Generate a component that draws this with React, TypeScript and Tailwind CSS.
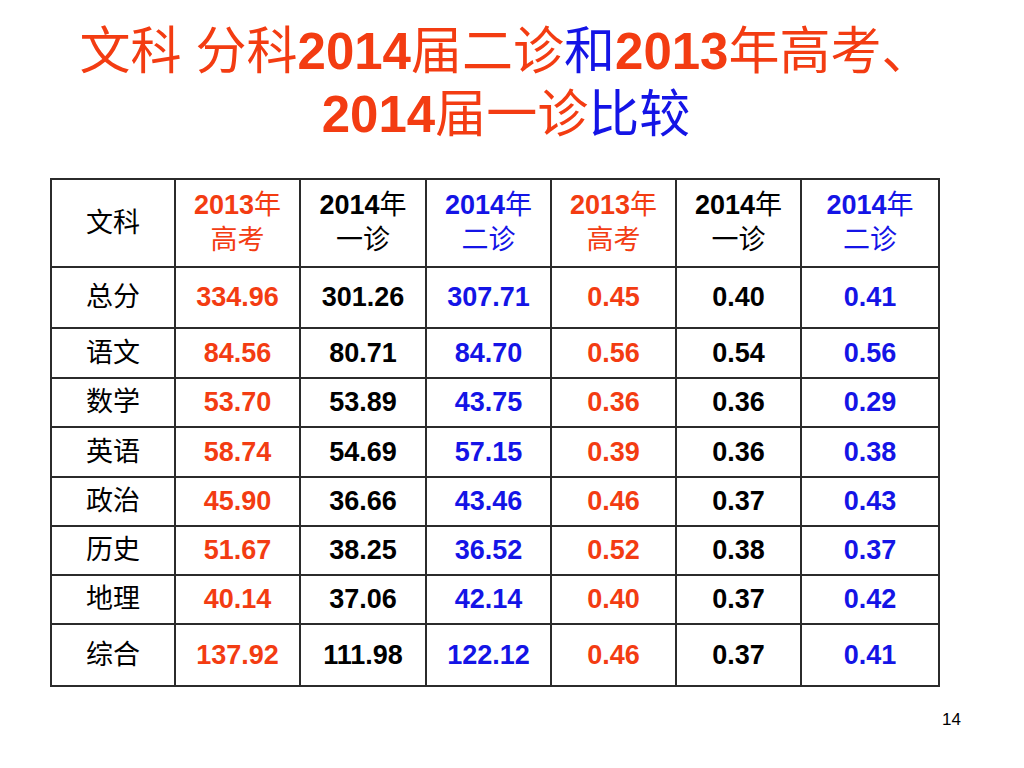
const RED = "text-[#f33c12]"
const BLUE = "text-[#1414e6]"
const BLACK = "text-black"

const colColors = [RED, BLACK, BLUE, RED, BLACK, BLUE]

const headers: [string, string][] = [
  ["2013", "高考"],
  ["2014", "一诊"],
  ["2014", "二诊"],
  ["2013", "高考"],
  ["2014", "一诊"],
  ["2014", "二诊"],
]

const rows: { name: string; h: string; values: string[] }[] = [
  { name: "总分", h: "h-[61px]", values: ["334.96", "301.26", "307.71", "0.45", "0.40", "0.41"] },
  { name: "语文", h: "h-[50px]", values: ["84.56", "80.71", "84.70", "0.56", "0.54", "0.56"] },
  { name: "数学", h: "h-[49px]", values: ["53.70", "53.89", "43.75", "0.36", "0.36", "0.29"] },
  { name: "英语", h: "h-[50px]", values: ["58.74", "54.69", "57.15", "0.39", "0.36", "0.38"] },
  { name: "政治", h: "h-[49px]", values: ["45.90", "36.66", "43.46", "0.46", "0.37", "0.43"] },
  { name: "历史", h: "h-[49px]", values: ["51.67", "38.25", "36.52", "0.52", "0.38", "0.37"] },
  { name: "地理", h: "h-[49px]", values: ["40.14", "37.06", "42.14", "0.40", "0.37", "0.42"] },
  { name: "综合", h: "h-[62px]", values: ["137.92", "111.98", "122.12", "0.46", "0.37", "0.41"] },
]

const cell = "border-2 border-[#2b2b2b] text-center align-middle p-0"

export default function App() {
  return (
    <div
      className="w-[1024px] h-[768px] bg-white relative overflow-hidden"
      style={{ fontFamily: '"Liberation Sans", "Noto Sans CJK SC", sans-serif' }}
    >
      {/* Title */}
      <div className="pt-[20px] pr-[12px] text-center text-[51px] leading-[63px] text-[#f33c12]">
        <div className="whitespace-nowrap">
          文科<span className="inline-block w-[14px]" />分科<b className="font-bold">2014</b>届二诊
          <span className={BLUE}>和</span>
          <b className="font-bold">2013</b>年高考、
        </div>
        <div className="whitespace-nowrap">
          <b className="font-bold">2014</b>届一诊<span className={BLUE}>比较</span>
        </div>
      </div>

      {/* Table */}
      <div className="pl-[50px] mt-[32px]">
        <table className="border-collapse table-fixed w-[890px] text-[27px]">
          <colgroup>
            <col className="w-[124px]" />
            <col className="w-[125px]" />
            <col className="w-[126px]" />
            <col className="w-[125px]" />
            <col className="w-[125px]" />
            <col className="w-[125px]" />
            <col className="w-[138px]" />
          </colgroup>
          <thead>
            <tr className="h-[88px]">
              <th className={`${cell} font-normal text-black`}>文科</th>
              {headers.map(([year, label], i) => (
                <th key={i} className={`${cell} font-normal leading-[35px] ${colColors[i]}`}>
                  <div>
                    <b className="font-bold">{year}</b>年
                  </div>
                  <div>{label}</div>
                </th>
              ))}
            </tr>
          </thead>
          <tbody>
            {rows.map((r) => (
              <tr key={r.name} className={r.h}>
                <td className={`${cell} text-black`}>{r.name}</td>
                {r.values.map((v, i) => (
                  <td key={i} className={`${cell} font-bold ${colColors[i]}`}>
                    {v}
                  </td>
                ))}
              </tr>
            ))}
          </tbody>
        </table>
      </div>

      {/* Page number */}
      <div className="absolute left-[942px] top-[707px] text-[17px] text-black">14</div>
    </div>
  )
}
